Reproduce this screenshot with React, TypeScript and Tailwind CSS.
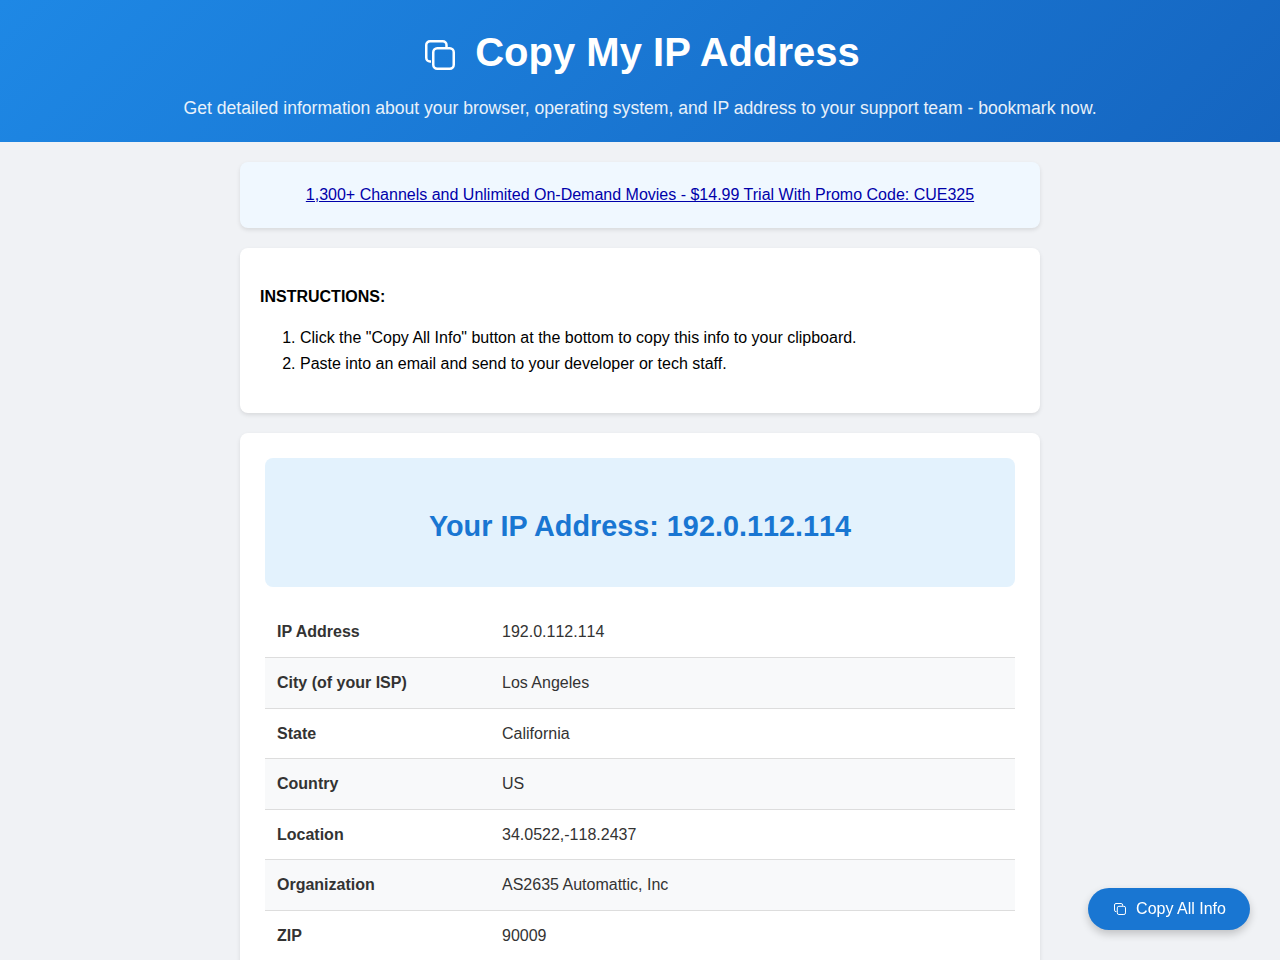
const rows = [
  ['IP Address', '192.0.112.114'],
  ['City (of your ISP)', 'Los Angeles'],
  ['State', 'California'],
  ['Country', 'US'],
  ['Location', '34.0522,-118.2437'],
  ['Organization', 'AS2635 Automattic, Inc'],
  ['ZIP', '90009'],
];

function CopyIcon({ className }: { className: string }) {
  return (
    <svg viewBox="0 0 30 30" fill="none" stroke="currentColor" strokeWidth="2.5" className={className}>
      <rect x="8.25" y="8.25" width="20.5" height="20.5" rx="4" />
      <path d="M6 21.5H5A3.75 3.75 0 0 1 1.25 17.75V5A3.75 3.75 0 0 1 5 1.25H17.75A3.75 3.75 0 0 1 21.5 5V7" />
    </svg>
  );
}

export default function App() {
  return (
    <div className="min-h-screen bg-[#f0f2f5] font-[Arial,'Liberation_Sans',sans-serif] text-base leading-[25.6px] text-[#333]">
      <header className="h-[142px] bg-linear-[135deg,#1e88e5,#1565c0] pt-[20px] text-center text-white">
        <h1 className="flex h-[64px] items-center justify-center gap-[20px] pl-[5px] pt-[1px] text-[40px] font-bold">
          <CopyIcon className="mt-[5px] h-[30px] w-[30px]" />
          <span>Copy My IP Address</span>
        </h1>
        <p className="mt-[10px] text-[17.6px] leading-[28.16px] opacity-90">
          Get detailed information about your browser, operating system, and IP address to your support team - bookmark now.
        </p>
      </header>

      <main className="mx-auto w-[800px] pt-5">
        <div className="mb-5 rounded-lg bg-[#f0f8ff] p-5 text-center shadow-[0_2px_4px_rgba(0,0,0,0.1)]">
          <a href="#" className="text-[#0000aa] underline">
            1,300+ Channels and Unlimited On-Demand Movies - $14.99 Trial With Promo Code: CUE325
          </a>
        </div>

        <div className="mb-5 rounded-lg bg-white p-5 text-black shadow-[0_2px_4px_rgba(0,0,0,0.1)]">
          <p className="my-4 font-bold">INSTRUCTIONS:</p>
          <ol className="mb-[17px] list-decimal pl-10">
            <li>Click the "Copy All Info" button at the bottom to copy this info to your clipboard.</li>
            <li>Paste into an email and send to your developer or tech staff.</li>
          </ol>
        </div>

        <div className="rounded-lg bg-white p-[25px] shadow-[0_2px_4px_rgba(0,0,0,0.1)]">
          <div className="mb-5 rounded-lg bg-[#e3f2fd] pt-[46px] pb-[38px] text-center">
            <h2 className="text-[28.8px] leading-[45px] font-bold text-[#1976d2]">
              Your IP Address: <span className="[font-kerning:none]">192.0.112.114</span>
            </h2>
          </div>
          <table className="w-full border-collapse">
            <tbody>
              {rows.map(([label, value]) => (
                <tr key={label} className="border-b border-[#ddd] even:bg-[#f8f9fa]">
                  <td className="w-[30%] p-3 font-bold">{label}</td>
                  <td className={value.includes('11') ? 'p-3 [font-kerning:none]' : 'p-3'}>{value}</td>
                </tr>
              ))}
            </tbody>
          </table>
        </div>
      </main>

      <button className="fixed right-[30px] bottom-[30px] flex h-[42px] w-[162px] items-center justify-center gap-[10px] rounded-[25px] bg-[#1976d2] pl-[2px] text-white shadow-[0_4px_8px_rgba(0,0,0,0.2)]">
        <CopyIcon className="h-3 w-3" />
        <span>Copy All Info</span>
      </button>
    </div>
  );
}
